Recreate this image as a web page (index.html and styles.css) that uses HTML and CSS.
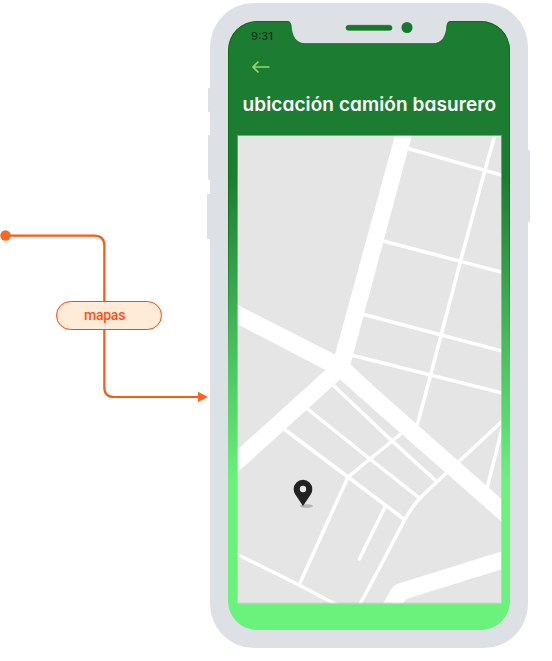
FILE: index.html
```html
<!DOCTYPE html>
<html lang="es">
<head>
<meta charset="utf-8">
<title>Ubicación camión basurero</title>
<link rel="stylesheet" href="styles.css">
</head>
<body>
<main class="flow">
  <section class="connector">
    <svg class="connector-line" width="210" height="180" viewBox="0 230 210 180" aria-hidden="true">
      <path d="M5 235.7H94Q104.300 235.7 104.300 245.700V387Q104.300 397 114 397H199" fill="none" stroke="#ff5a14" stroke-width="2.200"/>
      <circle cx="5.500" cy="235.500" r="5.200" fill="#ff6422"/>
      <path d="M198 391.700L208 397L198 402Z" fill="#ff6422"/>
    </svg>
    <span class="label">mapas</span>
  </section>
  <section class="phone">
    <i class="key mute"></i><i class="key vol-up"></i><i class="key vol-down"></i><i class="key power"></i>
    <div class="screen">
      <svg class="notch" width="166" height="24" viewBox="286 20 166 24" aria-hidden="true">
        <path d="M286 20V21H287Q290.500 21 291 25C291.500 36 296 43.500 305 43.500H433C442 43.500 446.500 36 447 25Q447.500 21 451 21H452V20Z" fill="#dde1e6"/>
        <path d="M287 21.300Q290.500 21.300 291 25C291.500 36 296 43.700 305 43.700H433C442 43.700 446.500 36 447 25Q447.500 21.300 451 21.300" fill="none" stroke="#07700f" stroke-width=".8"/>
        <rect x="346" y="25.300" width="46" height="5" rx="2.500" fill="#14792a" stroke="#07700f" stroke-width=".6"/>
        <circle cx="407" cy="27.500" r="5.500" fill="#14792a"/>
      </svg>
      <time class="clock">9:31</time>
      <svg class="back" width="20" height="14" viewBox="0 0 20 14" aria-hidden="true">
        <path d="M18.500 7H2M7.500 1.500L2 7L7.500 12.500" fill="none" stroke="#91d96b" stroke-width="1.700"/>
      </svg>
      <h1 class="title">ubicación camión basurero</h1>
      <svg class="map" width="265" height="469" viewBox="237 135 265 469" role="img" aria-label="Mapa">
        <defs>
          <linearGradient id="edge" x1="0" y1="135" x2="0" y2="604" gradientUnits="userSpaceOnUse">
            <stop offset="0" stop-color="#5a9e58"/>
            <stop offset=".45" stop-color="#7fd080"/>
            <stop offset=".75" stop-color="#c8cac8"/>
          </linearGradient>
          <clipPath id="frame"><rect x="237.500" y="135" width="264" height="468.300"/></clipPath>
        </defs>
        <g clip-path="url(#frame)">
          <rect x="237" y="135" width="265" height="469" fill="#e5e5e5"/>
          <g fill="none" stroke="#fff" stroke-width="3.500">
            <path d="M408 148.500L503 175.500M383 241L503 272.500M363 314.300L503 351.200M351 355L503 393.300"/>
            <path d="M495.500 133L485 170L460 263L432 370L417 426"/>
            <path d="M333 385L390 439L436.500 481.500M307 408.500L370 459L420 498.500M284 429L348 477L404.500 519.500"/>
            <path d="M402 433L370 459L348 477L299 585M236 553.700L299 585L337 605"/>
            <path d="M385 507L359.500 559" stroke-linecap="round"/>
            <path d="M359 606L380 567L404 521Q411 508 421 497L447 472.500L503 420.500M503.500 424L487 488"/>
          </g>
          <g fill="#fff">
            <path d="M395 135H412L350.500 364.500L380 391.700L503 500.500V523L380 415L340 379.500L237 473V450L325.500 370L237 324V304.500L335 354.500Z"/>
            <path d="M383 604L391 589.500Q393 585.500 397 584L503 551V569L406 599L403 604Z"/>
          </g>
          <ellipse cx="306.500" cy="506" rx="6.500" ry="1.800" fill="#b5b5b5"/>
          <path d="M303 506L296 495.500C294.500 493.500 293.700 491.500 293.700 489A9.300 9.300 0 0 1 312.300 489C312.300 491.500 311.500 493.500 310 495.500Z" fill="#222"/>
          <circle cx="303" cy="489" r="3.200" fill="#e9e9e9"/>
        </g>
        <path d="M237.500 603V135.500H501.500V603Z" fill="none" stroke="url(#edge)" stroke-width=".8"/>
      </svg>
    </div>
  </section>
</main>
</body>
</html>
```
FILE: styles.css
```css
* { box-sizing: border-box; }
body { margin: 0; background: #fff; overflow: hidden; }
.flow {
  display: grid;
  grid-template-columns: 210px 318px;
  align-items: start;
  width: 552px;
  height: 661px;
  padding-top: 3px;
}
.connector { position: relative; display: grid; padding-top: 227px; }
.connector-line { display: block; }
.label {
  position: absolute;
  left: 56px;
  top: 298px;
  width: 106px;
  height: 29px;
  padding-left: 27px;
  border: 1.5px solid #f9480b;
  border-radius: 15px;
  background: #ffebd7;
  color: #ff5016;
  font: 500 14px/27px Roboto, sans-serif;
  letter-spacing: -.25px;
}
.phone {
  position: relative;
  height: 645px;
  padding: 18px 18.500px 18px 18px;
  border-radius: 44px;
  background: #dde1e6;
}
.key { position: absolute; width: 5px; background: #dde1e6; border-radius: 1px; }
.mute { left: -2px; top: 85px; height: 24px; }
.vol-up { left: -2px; top: 132px; height: 45px; }
.vol-down { left: -3px; top: 191px; height: 45px; }
.power { right: -2px; top: 147px; height: 72px; }
.screen {
  position: relative;
  display: flex;
  flex-direction: column;
  align-items: flex-start;
  height: 609px;
  border-radius: 29px;
  background: linear-gradient(#1c7c31 0, #1c7c31 155px, #6af27d 460px);
}
.screen::before {
  content: "";
  position: absolute;
  inset: 0;
  border: 1px solid #07700f;
  border-bottom: 0;
  border-radius: 29px;
  mask-image: linear-gradient(#000 150px, transparent 340px);
}
.notch { position: absolute; left: 58px; top: -1px; }
.clock {
  margin: 9px 0 0 23px;
  height: 13px;
  color: #10361b;
  font: 500 11px/13px Inter, sans-serif;
}
.back { margin: 17px 0 0 23px; }
.title {
  margin: 18px 0 0 14.500px;
  height: 26px;
  color: #fff;
  font: 600 19px/26px Inter, sans-serif;
  font-feature-settings: "cv11";
  letter-spacing: .1px;
  white-space: nowrap;
}
.map { display: block; margin: 17px 0 0 9px; }
```
